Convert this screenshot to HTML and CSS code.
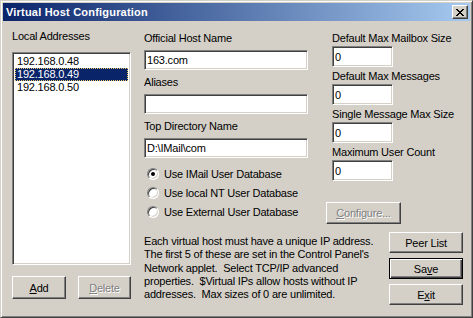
FILE: index.html
```html
<!DOCTYPE html>
<html lang="en">
<head>
  <meta charset="UTF-8">
  <title>Virtual Host Configuration</title>
  <link rel="stylesheet" href="styles.css">
</head>
<body>
  <div class="window">
    <div class="titlebar">
      <span class="title">Virtual Host Configuration</span>
      <span class="close-btn">
        <svg width="8" height="7" viewBox="0 0 8 7">
          <path d="M0 0h2v1h1v1h2V1h1V0h2v1H7v1H6v1H5v1h1v1h1v1h1v1H6V6H5V5H3v1H2v1H0V6h1V5h1V4h1V3H2V2H1V1H0z" fill="#000"/>
        </svg>
      </span>
    </div>

    <div class="content">
      <!-- address list -->
      <div class="left-col">
        <div class="label">Local Addresses</div>
        <div class="listbox">
          <div class="item">192.168.0.48</div>
          <div class="item selected">192.168.0.49</div>
          <div class="item">192.168.0.50</div>
        </div>
        <div class="left-buttons">
          <button class="btn btn-add"><u>A</u>dd</button>
          <button class="btn btn-delete disabled"><u>D</u>elete</button>
        </div>
      </div>

      <div class="main">
        <div class="upper">
          <div class="host-col">
            <div class="label">Official Host Name</div>
            <input type="text" class="edit wide" value="163.com">
            <div class="label">Aliases</div>
            <input type="text" class="edit wide" value="">
            <div class="label">Top Directory Name</div>
            <input type="text" class="edit wide" value="D:\IMail\com">

            <div class="radios">
              <div class="radio-row"><span class="radio checked"></span>Use IMail User Database</div>
              <div class="radio-row"><span class="radio"></span>Use local NT User Database</div>
              <div class="radio-row"><span class="radio"></span>Use External User Database</div>
            </div>
          </div>

          <div class="limits-col">
            <div class="label">Default Max Mailbox Size</div>
            <input type="text" class="edit small" value="0">
            <div class="label">Default Max Messages</div>
            <input type="text" class="edit small" value="0">
            <div class="label">Single Message Max Size</div>
            <input type="text" class="edit small" value="0">
            <div class="label">Maximum User Count</div>
            <input type="text" class="edit small" value="0">
            <button class="btn btn-configure disabled"><u>C</u>onfigure...</button>
          </div>
        </div>

        <div class="lower">
          <p class="info">Each virtual host must have a unique IP address.<br>The first 5 of these are set in the Control Panel's<br>Network applet.&nbsp; Select TCP/IP advanced<br>properties.&nbsp; $Virtual IPs allow hosts without IP<br>addresses.&nbsp; Max sizes of 0 are unlimited.</p>
          <div class="actions">
            <button class="btn btn-action">Peer List</button>
            <button class="btn btn-action default">Sa<u>v</u>e</button>
            <button class="btn btn-action">E<u>x</u>it</button>
          </div>
        </div>
      </div>
    </div>
  </div>
</body>
</html>
```

FILE: styles.css
```css
* {
  box-sizing: border-box;
}
body {
  margin: 0;
  background: #d4d0c8;
  font-family: "Liberation Sans", Arial, sans-serif;
  font-size: 11px;
  letter-spacing: -0.2px;
  color: #000;
}
.window {
  width: 473px;
  height: 318px;
  background: #d4d0c8;
  border: 1px solid;
  border-color: #d4d0c8 #404040 #404040 #d4d0c8;
  box-shadow: inset 1px 1px #fff, inset -1px -1px #808080;
  padding: 2px;
}
.titlebar {
  height: 18px;
  display: flex;
  align-items: center;
  background: linear-gradient(to right, #0a246a, #a6caf0);
  padding: 0 2px 0 3px;
}
.title {
  flex: 1;
  color: #fff;
  font-weight: bold;
  font-size: 11px;
  letter-spacing: 0.2px;
}
.close-btn {
  width: 16px;
  height: 14px;
  display: flex;
  align-items: center;
  justify-content: center;
  background: #d4d0c8;
  border: 1px solid;
  border-color: #fff #404040 #404040 #fff;
  box-shadow: inset -1px -1px #808080;
}
.content {
  display: flex;
  padding: 9px 7px 0 9px;
}
.label {
  line-height: 13px;
  height: 13px;
  white-space: nowrap;
}

/* left column */
.left-col {
  width: 119px;
}
.listbox {
  margin-top: 9px;
  height: 213px;
  background: #fff;
  border: 1px solid;
  border-color: #808080 #fff #fff #808080;
  box-shadow: inset 1px 1px #404040, inset -1px -1px #d4d0c8;
  padding: 2px;
}
.item {
  height: 13px;
  line-height: 13px;
  padding-left: 2px;
}
.item.selected {
  background: #0a246a;
  color: #fff;
  outline: 1px dotted #e8c860;
  outline-offset: -1px;
}
.left-buttons {
  display: flex;
  gap: 12px;
  margin-top: 11px;
}

/* buttons */
.btn {
  font-family: inherit;
  font-size: 11px;
  letter-spacing: inherit;
  color: #000;
  background: #d4d0c8;
  border: 1px solid;
  border-color: #fff #404040 #404040 #fff;
  box-shadow: inset -1px -1px #808080;
  padding: 0;
  margin: 0;
}
.btn.default {
  border: 1px solid #000;
  box-shadow: inset 1px 1px #fff, inset -1px -1px #404040, inset -2px -2px #808080;
}
.btn.disabled {
  color: #808080;
  text-shadow: 1px 1px #fff;
}
.btn-add {
  width: 54px;
  height: 23px;
}
.btn-delete {
  width: 53px;
  height: 23px;
}

/* main area */
.main {
  margin-left: 13px;
  margin-top: 2px;
  flex: 1;
}
.upper {
  display: flex;
}
.host-col {
  width: 164px;
}
.host-col .label {
  margin-bottom: 5px;
}
.edit {
  display: block;
  font-family: inherit;
  font-size: 11px;
  letter-spacing: inherit;
  color: #000;
  background: #fff;
  border: 1px solid;
  border-color: #808080 #fff #fff #808080;
  box-shadow: inset 1px 1px #404040, inset -1px -1px #d4d0c8;
  padding: 0 2px;
  margin: 0;
  outline: none;
}
.edit.wide {
  width: 164px;
  height: 20px;
  margin-bottom: 6px;
}
.edit.small {
  width: 61px;
  height: 21px;
  margin-top: 1px;
  margin-bottom: 3px;
}
.radios {
  margin-top: 1px;
}
.radio-row {
  display: flex;
  align-items: center;
  height: 19px;
  white-space: nowrap;
}
.radio {
  position: relative;
  width: 12px;
  height: 12px;
  margin: 0 5px 0 3px;
  border-radius: 50%;
  background: #fff;
  border: 1px solid;
  border-color: #808080 #fff #fff #808080;
  box-shadow: inset 1px 1px #404040, inset -1px -1px #d4d0c8;
}
.radio.checked::after {
  content: "";
  position: absolute;
  left: 3px;
  top: 3px;
  width: 4px;
  height: 4px;
  border-radius: 50%;
  background: #000;
}
.limits-col {
  margin-left: 24px;
}
.btn-configure {
  display: block;
  width: 75px;
  height: 22px;
  margin: 21px 0 0 -6px;
}

/* bottom */
.lower {
  display: flex;
  margin-top: 8px;
}
.info {
  margin: 3px 0 0 0;
  line-height: 13.3px;
  white-space: nowrap;
}
.actions {
  margin-left: auto;
  display: flex;
  flex-direction: column;
  gap: 5px;
}
.btn-action {
  width: 74px;
  height: 21px;
}
```
